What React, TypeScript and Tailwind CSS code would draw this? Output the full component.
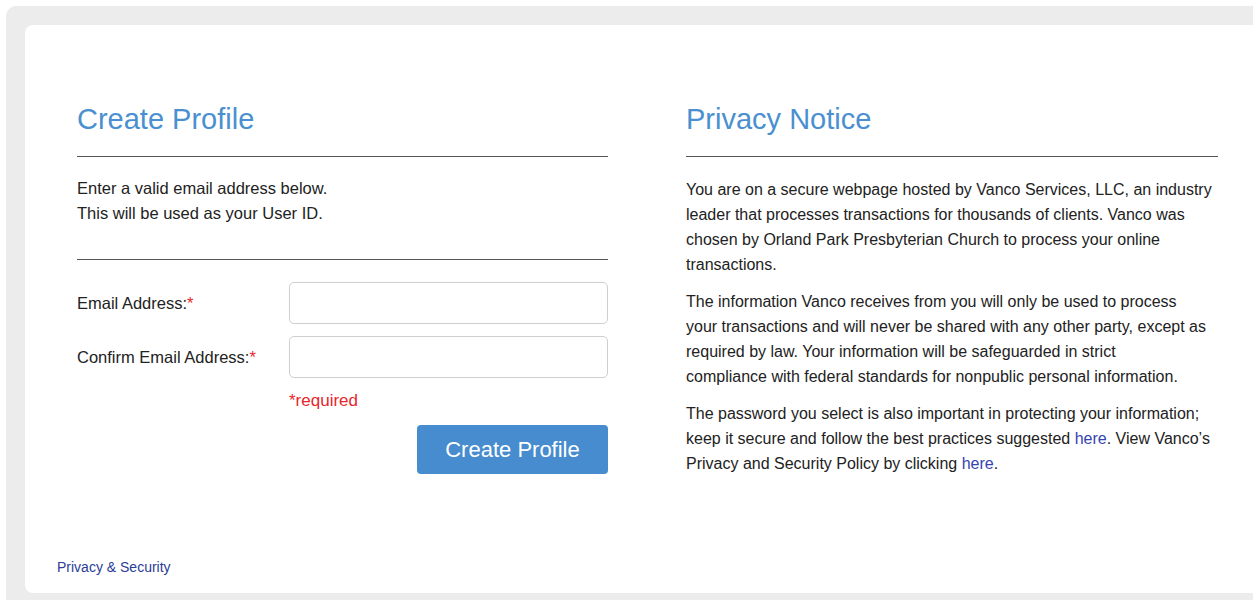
import { ReactNode } from 'react';

const font = { fontFamily: '"Liberation Sans", Arial, sans-serif' };

function SectionTitle({ children }: { children: ReactNode }) {
  return (
    <h1 className="text-[29px] leading-[36px] text-[#4a90d0] pb-[19px] border-b border-[#555555]">
      {children}
    </h1>
  );
}

function Field({ label }: { label: string }) {
  return (
    <div className="flex items-center">
      <label className="w-[212px] text-[16.5px] text-[#222]">
        {label}
        <span className="text-[#e8262b]">*</span>
      </label>
      <input
        type="email"
        className="flex-1 h-[42px] rounded-[5px] border border-[#cfcfcf] px-3 outline-none"
      />
    </div>
  );
}

function Link({ children }: { children: ReactNode }) {
  return <a className="text-[#3344b0] cursor-pointer">{children}</a>;
}

export default function App() {
  return (
    <div className="min-h-screen bg-white pt-[6px] pl-[6px] overflow-hidden" style={font}>
      <div className="bg-[#ececec] rounded-tl-[10px] pt-[19px] pl-[19px] pb-[8px]">
        <div className="bg-white rounded-l-[8px] pl-[52px] pr-[35px] pt-[76px]">
          <div className="grid grid-cols-[531px_532px] gap-x-[78px]">
            {/* Sign-up form */}
            <section>
              <SectionTitle>Create Profile</SectionTitle>
              <div className="pt-[19px] pb-[33px] border-b border-[#555555] text-[16.5px] leading-[25px] text-[#222]">
                <p>Enter a valid email address below.</p>
                <p>This will be used as your User ID.</p>
              </div>
              <div className="pt-[22px] flex flex-col gap-[12px]">
                <Field label="Email Address:" />
                <Field label="Confirm Email Address:" />
              </div>
              <p className="pl-[212px] mt-[10px] text-[17px] leading-[25px] text-[#e8262b]">*required</p>
              <div className="flex justify-end mt-[12px]">
                <button className="w-[191px] h-[49px] rounded-[4px] bg-[#468cce] text-white text-[22px]">
                  Create Profile
                </button>
              </div>
            </section>

            {/* Privacy text */}
            <section>
              <SectionTitle>Privacy Notice</SectionTitle>
              <div className="pt-[20px] text-[16px] leading-[25px] text-[#222] flex flex-col gap-[12px] whitespace-nowrap">
                <p>
                  You are on a secure webpage hosted by Vanco Services, LLC, an industry
                  <br />
                  leader that processes transactions for thousands of clients. Vanco was
                  <br />
                  chosen by Orland Park Presbyterian Church to process your online
                  <br />
                  transactions.
                </p>
                <p>
                  The information Vanco receives from you will only be used to process
                  <br />
                  your transactions and will never be shared with any other party, except as
                  <br />
                  required by law. Your information will be safeguarded in strict
                  <br />
                  compliance with federal standards for nonpublic personal information.
                </p>
                <p>
                  The password you select is also important in protecting your information;
                  <br />
                  keep it secure and follow the best practices suggested <Link>here</Link>. View Vanco’s
                  <br />
                  Privacy and Security Policy by clicking <Link>here</Link>.
                </p>
              </div>
            </section>
          </div>

          <footer className="-ml-[20px] pt-[79px] pb-[14px]">
            <a className="text-[14px] leading-[18px] text-[#2b3c97] cursor-pointer">Privacy &amp; Security</a>
          </footer>
        </div>
      </div>
    </div>
  );
}
